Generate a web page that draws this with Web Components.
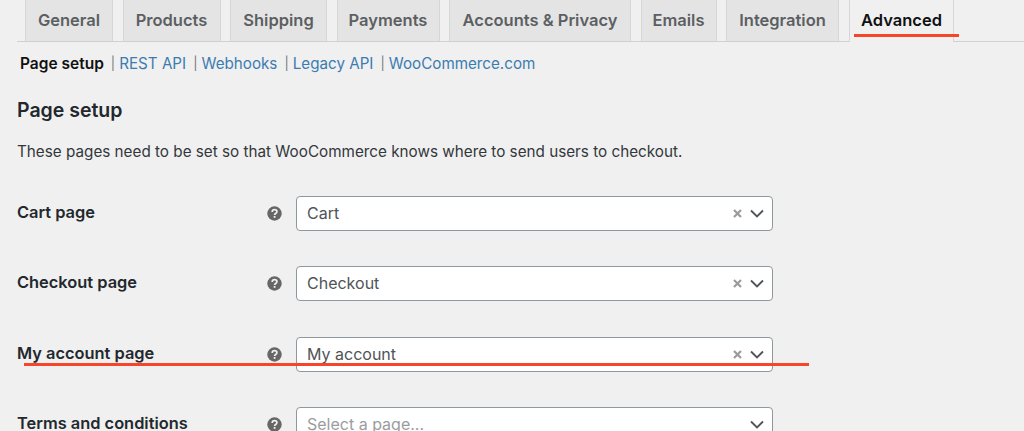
<!DOCTYPE html>
<html lang="en">
<head>
<meta charset="utf-8">
<title>WooCommerce settings - Advanced</title>
<style>
    html, body{
        margin: 0;
        height: 431px;
        overflow: hidden;
        background: #f0f0f1;
    }
    body{
        position: relative;
        font-family: Inter, "Liberation Sans", sans-serif;
        color: #23282d;
    }
</style>
</head>
<body>
<woo-tabs>
    <woo-tab width="88">General</woo-tab>
    <woo-tab width="98">Products</woo-tab>
    <woo-tab width="97">Shipping</woo-tab>
    <woo-tab width="103">Payments</woo-tab>
    <woo-tab width="182">Accounts &amp; Privacy</woo-tab>
    <woo-tab width="76">Emails</woo-tab>
    <woo-tab width="113">Integration</woo-tab>
    <woo-tab width="105" active>Advanced</woo-tab>
</woo-tabs>
<woo-subnav></woo-subnav>
<woo-section heading="Page setup" intro="These pages need to be set so that WooCommerce knows where to send users to checkout.">
    <woo-field label="Cart page" value="Cart"></woo-field>
    <woo-field label="Checkout page" value="Checkout"></woo-field>
    <woo-field label="My account page" value="My account"></woo-field>
    <woo-field label="Terms and conditions" placeholder="Select a page..."></woo-field>
</woo-section>
<red-mark style="left:854px;top:34px;width:105px"></red-mark>
<red-mark style="left:24px;top:363px;width:785px"></red-mark>
<script>
//tab strip
class WooTabs extends HTMLElement {
    constructor(){
        super();
        this.attachShadow({mode: "open"}).innerHTML = `
        <style>
            :host{
                display: flex;
                gap: 9.5px;
                height: 41px;
                margin-left: 17px;
                padding-left: 8px;
                border-bottom: 1px solid #d0d0d2;
            }
        </style>
        <slot></slot>`;
    }
}

class WooTab extends HTMLElement {
    constructor(){
        super();
        this.attachShadow({mode: "open"}).innerHTML = `
        <style>
            :host{
                display: flex;
                align-items: center;
                justify-content: center;
                box-sizing: border-box;
                height: 41px;
                padding-bottom: 2px;
                border: 1px solid #d6d6d8;
                border-top: 0;
                border-bottom: 0;
                background: #e4e4e5;
                color: #5c5f62;
                font-size: 16.5px;
                font-weight: 600;
            }
            :host([active]){
                height: 42px;
                padding-bottom: 3px;
                padding-left: 1px;
                background: #f0f0f1;
                color: #0f1113;
            }
        </style>
        <slot></slot>`;
    }
    connectedCallback(){
        this.style.width = this.getAttribute("width") + "px";
    }
}

class WooSubnav extends HTMLElement {
    constructor(){
        super();
        this.attachShadow({mode: "open"}).innerHTML = `
        <style>
            :host{
                display: flex;
                align-items: center;
                height: 20px;
                margin-top: 11px;
                padding-left: 20px;
                font-size: 15.2px;
                color: #777;
                white-space: nowrap;
            }
            b{ color: #111; font-size: 15.5px; font-weight: 600; margin-right: 7px; }
            a{ color: #3b7cb0; text-decoration: none; }
            i{ font-style: normal; font-size: 13px; margin-right: 4px; }
            a + i{ margin-left: 7px; }
        </style>
        <b>Page setup</b><i>|</i><a href="#">REST API</a><i>|</i><a href="#">Webhooks</a><i>|</i><a href="#">Legacy API</a><i>|</i><a href="#">WooCommerce.com</a>`;
    }
}

class WooSection extends HTMLElement {
    constructor(){
        super();
        this.attachShadow({mode: "open"}).innerHTML = `
        <style>
            :host{
                display: block;
                padding-left: 17px;
            }
            h2{
                margin: 24px 0 0;
                font-size: 19.5px;
                line-height: 26px;
                font-weight: 600;
                color: #23282d;
            }
            p{
                margin: 19px 0 0;
                font-size: 15.25px;
                line-height: 20px;
                color: #33373a;
                white-space: nowrap;
            }
            .rows{
                display: flex;
                flex-direction: column;
                gap: 35.4px;
                margin-top: 34px;
            }
        </style>
        <h2></h2>
        <p></p>
        <div class="rows"><slot></slot></div>`;
    }
    connectedCallback(){
        this.shadowRoot.querySelector("h2").textContent = this.getAttribute("heading");
        this.shadowRoot.querySelector("p").textContent = this.getAttribute("intro");
    }
}

class WooField extends HTMLElement {
    constructor(){
        super();
        this.attachShadow({mode: "open"}).innerHTML = `
        <style>
            :host{
                display: grid;
                grid-template-columns: 250px 29px 477px;
                align-items: center;
                height: 35px;
            }
            label{
                font-size: 16.4px;
                font-weight: 600;
                color: #23282d;
                padding-bottom: 3px;
            }
            svg{ display: block; }
            .box{
                display: flex;
                align-items: center;
                box-sizing: border-box;
                height: 35px;
                padding: 0 8px 0 10px;
                background: #fff;
                border: 1px solid #8f979f;
                border-radius: 4px;
                font-size: 16px;
                color: #4f5457;
            }
            .box.empty{ color: #9a9da0; }
            .val{ flex: 1; padding-bottom: 1px; }
            .clear{ margin-right: 8px; margin-left: -1px; }
        </style>
        <label></label>
        <svg width="15" height="15" viewBox="0 0 15 15">
            <circle cx="7.5" cy="7.5" r="7.2" fill="#666"/>
            <path d="M5.2 5.9c0-1.4 1-2.2 2.4-2.2s2.3.8 2.3 2c0 1.9-2.3 1.8-2.3 3.4" fill="none" stroke="#f0f0f1" stroke-width="1.7"/>
            <rect x="6.7" y="10" width="1.8" height="1.8" fill="#f0f0f1"/>
        </svg>
        <div class="box">
            <span class="val"></span>
            <svg class="clear" width="9" height="9" viewBox="0 0 9 9"><path d="M1 1l7 7M8 1l-7 7" stroke="#9b9b9b" stroke-width="2.2"/></svg>
            <svg width="14" height="9" viewBox="0 0 14 9"><path d="M1 1.5l6 6 6-6" fill="none" stroke="#50555a" stroke-width="1.9"/></svg>
        </div>`;
    }
    connectedCallback(){
        const root = this.shadowRoot;
        root.querySelector("label").textContent = this.getAttribute("label");
        const placeholder = this.getAttribute("placeholder");
        root.querySelector(".val").textContent = placeholder || this.getAttribute("value");
        if(placeholder){
            root.querySelector(".box").classList.add("empty");
            root.querySelector(".clear").style.visibility = "hidden";
        }
    }
}

//hand drawn red underline on top of the screenshot
class RedMark extends HTMLElement {
    constructor(){
        super();
        this.attachShadow({mode: "open"}).innerHTML = `
        <style>
            :host{
                display: block;
                position: absolute;
                height: 3px;
                background: #f5452b;
            }
        </style>`;
    }
}

customElements.define("woo-tabs", WooTabs);
customElements.define("woo-tab", WooTab);
customElements.define("woo-subnav", WooSubnav);
customElements.define("woo-section", WooSection);
customElements.define("woo-field", WooField);
customElements.define("red-mark", RedMark);
</script>
</body>
</html>
